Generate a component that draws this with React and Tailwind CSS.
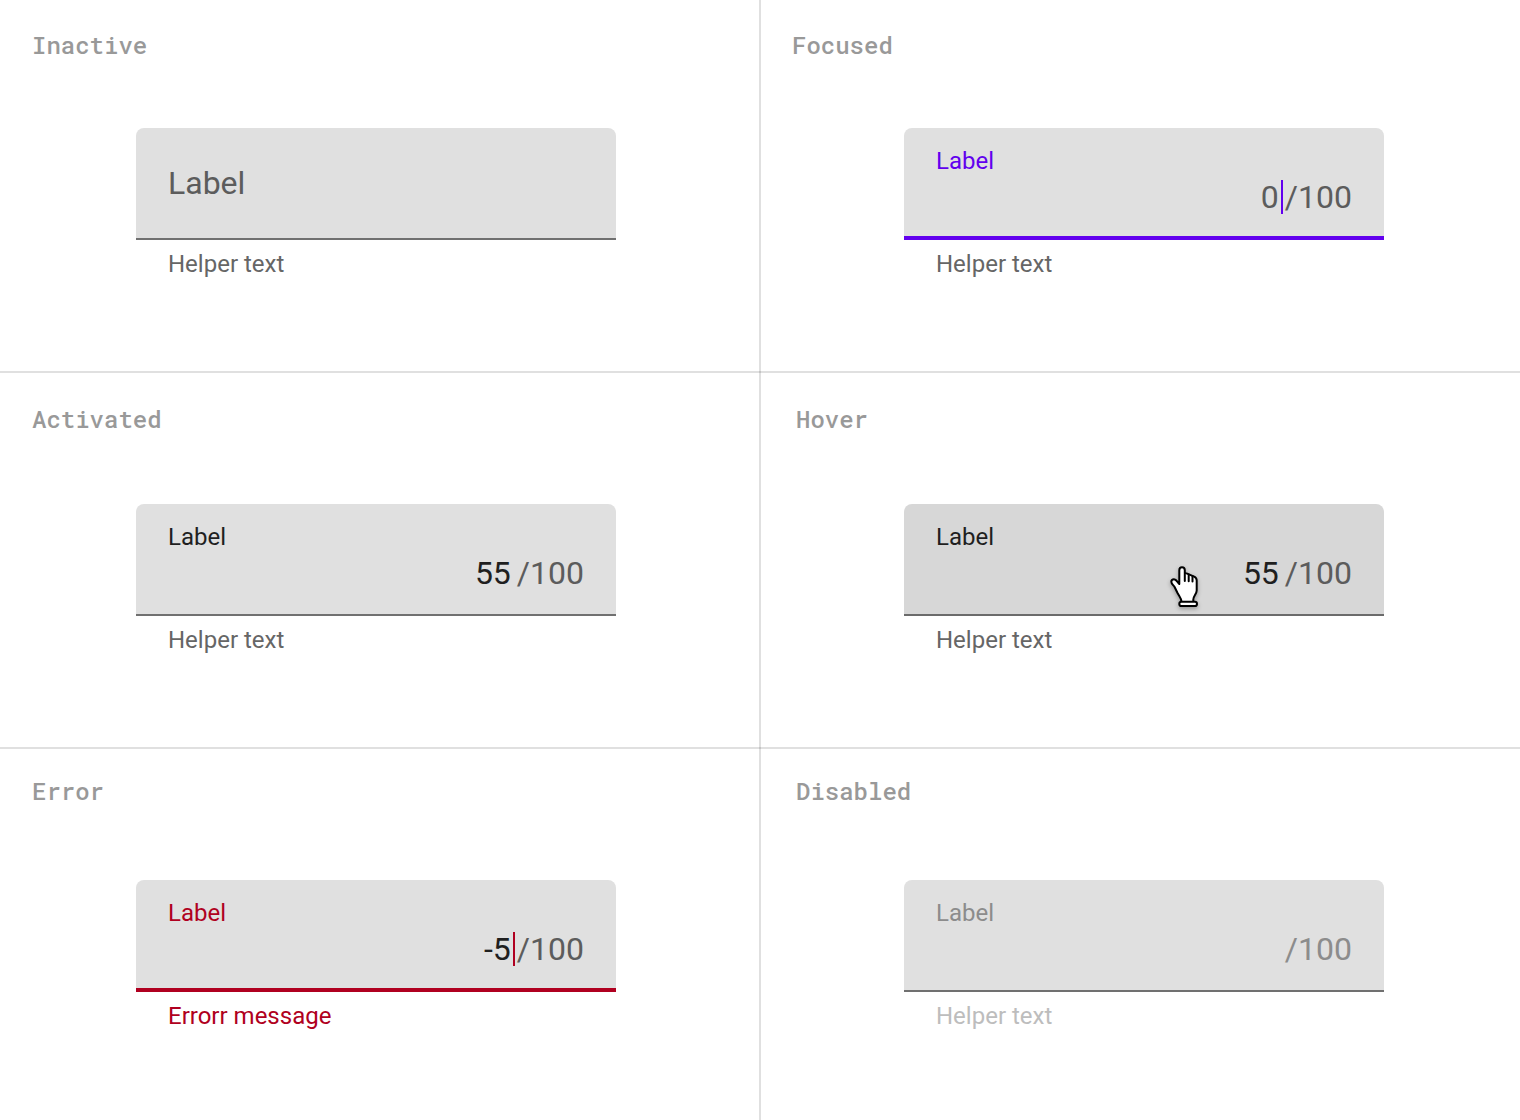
import React from "react";

const rows = [
  {
    className: "border-b-2 pt-[29px]",
    gap: "mt-[67px]",
    titleInsets: ["pl-8", "pl-8"],
    fields: [
      { id: "inactive", title: "Inactive", value: "", helper: "Helper text" },
      { id: "focused", title: "Focused", value: "0", helper: "Helper text" },
    ],
  },
  {
    className: "border-b-2 pt-[30px]",
    gap: "mt-[69px]",
    titleInsets: ["pl-8", "pl-9"],
    fields: [
      { id: "activated", title: "Activated", value: "55", helper: "Helper text" },
      { id: "hover", title: "Hover", value: "55", helper: "Helper text" },
    ],
  },
  {
    className: "pt-[26px]",
    gap: "mt-[73px]",
    titleInsets: ["pl-8", "pl-9"],
    fields: [
      { id: "error", title: "Error", value: "-5", helper: "Errorr message" },
      { id: "disabled", title: "Disabled", value: "", helper: "Helper text" },
    ],
  },
];

const looks = {
  inactive: {
    box: "bg-[#e0e0e0] border-b-2 border-[#707070]",
    label: "text-[#5c5c5c]",
    helper: "text-[#666666]",
  },
  focused: {
    box: "bg-[#e0e0e0] border-b-4 border-[#6200ee]",
    label: "text-[#6200ee]",
    input: "text-[#5c5c5c]",
    caret: "bg-[#6200ee]",
    suffix: "text-[#5c5c5c]",
    helper: "text-[#666666]",
  },
  activated: {
    box: "bg-[#e0e0e0] border-b-2 border-[#707070]",
    label: "text-[#1f1f1f]",
    input: "text-[#1f1f1f]",
    caret: "bg-transparent",
    suffix: "text-[#5c5c5c]",
    helper: "text-[#666666]",
  },
  hover: {
    box: "bg-[#d7d7d7] border-b-2 border-[#6b6b6b]",
    label: "text-[#1f1f1f]",
    input: "text-[#1f1f1f]",
    caret: "bg-transparent",
    suffix: "text-[#5c5c5c]",
    helper: "text-[#666666]",
  },
  error: {
    box: "bg-[#e0e0e0] border-b-4 border-[#b00020]",
    label: "text-[#b00020]",
    input: "text-[#1f1f1f]",
    caret: "bg-[#b00020]",
    suffix: "text-[#5c5c5c]",
    helper: "text-[#b00020]",
  },
  disabled: {
    box: "bg-[#e0e0e0] border-b-2 border-[#707070]",
    label: "text-[#8c8c8c]",
    input: "text-[#8c8c8c]",
    caret: "bg-transparent",
    suffix: "text-[#8c8c8c]",
    helper: "text-[#bdbdbd]",
  },
};

function HandCursor() {
  return (
    <svg
      aria-hidden="true"
      className="pointer-events-none absolute top-[60px] left-[264px] h-12 w-9 drop-shadow-[0_2px_2px_rgba(0,0,0,0.3)]"
      viewBox="0 0 36 48"
      fill="#fff"
      stroke="#000"
      strokeWidth="2"
      strokeLinejoin="round"
      strokeLinecap="round"
    >
      <path d="M11.3 20V6.2C11.3 4.4 12.4 3.2 14 3.2s2.8 1.2 2.8 3V8.600L26.200 12.600C28 13.400 28.700 14.600 28.700 16.500V26.500c0 3.500-3.400 5.500-3.400 9V38H13.600c0-3.600-2.400-5.700-4.200-9.200L6.600 23C5.700 21.400 3.300 20 3.300 17.700c0-1.700 1.200-2.500 2.700-2.500 2.400 0 3.600 3.200 5.300 4.800Z" />
      <path d="M16.800 9V17M20.700 10.500V17.200M24.500 12V17.400" fill="none" />
      <rect x="11.300" y="37.800" width="17.700" height="4.200" rx="2.100" />
    </svg>
  );
}

function TextField({ id, value, helper }) {
  const look = looks[id];
  const resting = id === "inactive";
  return (
    <div className="w-full max-w-[480px]">
      <div
        className={`relative flex h-28 rounded-t-lg px-8 ${
          resting ? "items-center" : "flex-col pt-[17px]"
        } ${look.box}`}
      >
        <label
          htmlFor={id}
          className={`${resting ? "text-[32px] leading-10" : "text-2xl leading-8"} ${look.label}`}
        >
          Label
        </label>
        {resting ? (
          <input
            id={id}
            defaultValue={value}
            aria-describedby={`${id}-helper`}
            className="min-w-0 flex-1 bg-transparent text-[32px] leading-10 outline-none"
          />
        ) : (
          <div className="flex h-10 items-center text-[32px] leading-10">
            <input
              id={id}
              defaultValue={value}
              disabled={id === "disabled"}
              aria-invalid={id === "error"}
              aria-describedby={`${id}-helper`}
              className={`h-10 min-w-0 flex-1 bg-transparent text-right outline-none ${look.input}`}
            />
            <span aria-hidden="true" className={`mx-0.5 h-[34px] w-0.5 ${look.caret}`} />
            <span className={look.suffix}>/100</span>
          </div>
        )}
        {id === "hover" && <HandCursor />}
      </div>
      <p id={`${id}-helper`} className={`mt-2 px-8 text-2xl leading-8 ${look.helper}`}>
        {helper}
      </p>
    </div>
  );
}

export default function App() {
  return (
    <main className="relative grid min-h-screen grid-rows-[minmax(373px,auto)_minmax(376px,auto)_1fr] bg-white font-['Roboto',sans-serif]">
      {rows.map((row) => (
        <div key={row.fields[0].id} className={`grid grid-cols-2 border-black/12 ${row.className}`}>
          {row.fields.map((field, column) => (
            <section key={field.id}>
              <h2
                className={`font-['Roboto_Mono','DejaVu_Sans_Mono',monospace] text-2xl leading-8 font-medium text-[#999999] ${row.titleInsets[column]}`}
              >
                {field.title}
              </h2>
              <div className={`${column === 0 ? "pl-[136px]" : "pl-36"} pr-8 ${row.gap}`}>
                <TextField {...field} />
              </div>
            </section>
          ))}
        </div>
      ))}
      <div
        aria-hidden="true"
        className="pointer-events-none absolute inset-y-0 left-1/2 w-0.5 -translate-x-1/2 bg-black/12"
      />
    </main>
  );
}
